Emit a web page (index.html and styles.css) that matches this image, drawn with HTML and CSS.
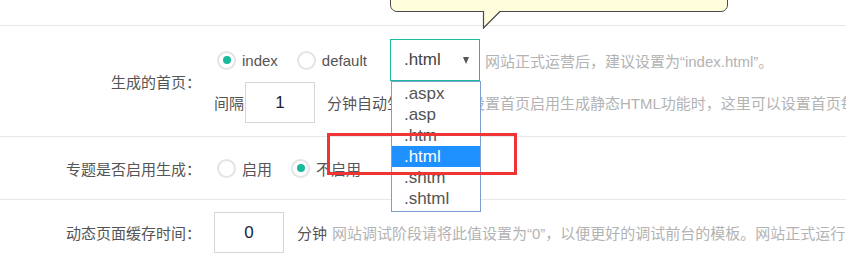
FILE: index.html
```html
<!DOCTYPE html>
<html lang="zh-CN">
<head>
    <meta charset="UTF-8">
    <title>生成设置</title>
    <link rel="stylesheet" href="styles.css">
</head>
<body>
    <div class="page">
        <div class="tip"></div>
        <svg class="tip-tail" width="20" height="20" viewBox="0 0 20 20">
            <polygon points="1.5,0 1.5,17 18,0" fill="#fffddc"/>
            <polyline points="1.5,0 1.5,17 18,0.5" fill="none" stroke="#4a4a4a" stroke-width="1.2"/>
        </svg>

        <div class="top"></div>

        <div class="row row-home">
            <label class="row-label">生成的首页：</label>
            <div class="row-field">
                <div class="line">
                    <span class="radio on"></span><span class="opt">index</span>
                    <span class="radio"></span><span class="opt">default</span>
                    <div class="select-wrap">
                        <div class="select">.html<span class="arrow"></span></div>
                        <ul class="select-list">
                            <li>.aspx</li>
                            <li>.asp</li>
                            <li>.htm</li>
                            <li class="selected">.html</li>
                            <li>.shtm</li>
                            <li>.shtml</li>
                        </ul>
                    </div>
                    <span class="hint">网站正式运营后，建议设置为“index.html”。</span>
                </div>
                <div class="line line-small">
                    <span>间隔</span>
                    <input class="num num-gap" type="text" value="1">
                    <span class="unit">分钟自动生成一次</span>
                    <span class="hint hint-gap">当设置首页启用生成静态HTML功能时，这里可以设置首页每隔多少分钟自动生成一次。</span>
                </div>
            </div>
        </div>

        <div class="row row-topic">
            <label class="row-label">专题是否启用生成：</label>
            <div class="row-field">
                <div class="line">
                    <span class="radio"></span><span class="opt">启用</span>
                    <span class="radio on"></span><span class="opt">不启用</span>
                </div>
            </div>
        </div>

        <div class="row row-cache">
            <label class="row-label">动态页面缓存时间：</label>
            <div class="row-field">
                <div class="line line-small">
                    <input class="num" type="text" value="0">
                    <span class="unit">分钟</span>
                    <span class="hint">网站调试阶段请将此值设置为“0”，以便更好的调试前台的模板。网站正式运行后请设置缓存时间。</span>
                </div>
            </div>
        </div>

        <div class="mark"></div>
    </div>
</body>
</html>
```

FILE: styles.css
```css
body {
    margin: 0;
    font-family: "Liberation Sans", "Noto Sans CJK SC", sans-serif;
    font-size: 15px;
    color: #555;
    background: #fff;
    overflow: hidden;
}
.page {
    position: relative;
    width: 846px;
    height: 257px;
    overflow: hidden;
}
.top {
    height: 25px;
}
.row {
    display: flex;
    align-items: center;
    border-top: 1px solid #e8e8e8;
    white-space: nowrap;
}
.row-home {
    height: 110px;
}
.row-topic {
    height: 62px;
}
.row-cache {
    padding: 12px 0;
}
.row-label {
    width: 201px;
    flex-shrink: 0;
    text-align: right;
    color: #555;
}
.row-field {
    padding-left: 13px;
}
.line {
    display: flex;
    align-items: center;
    height: 42px;
}
.line-small {
    height: 41px;
    margin-top: 1px;
}
.row-cache .line-small {
    margin-top: 0;
}
.radio {
    position: relative;
    width: 19px;
    height: 19px;
    margin: 0 6px 0 3px;
    border: 2px solid #e4e4e4;
    border-radius: 50%;
    box-sizing: border-box;
}
.radio.on::after {
    content: "";
    position: absolute;
    top: 3.5px;
    left: 3.5px;
    width: 8px;
    height: 8px;
    border-radius: 50%;
    background: #1ab99b;
}
.opt {
    margin-right: 16px;
}
.select-wrap {
    position: relative;
    margin-left: 7px;
}
.select {
    display: flex;
    align-items: center;
    width: 90px;
    height: 42px;
    padding-left: 13px;
    border: 1px solid #1abc9c;
    box-sizing: border-box;
    font-size: 17px;
    color: #444;
}
.arrow {
    margin-left: auto;
    margin-right: 10px;
    border-left: 3.5px solid transparent;
    border-right: 3.5px solid transparent;
    border-top: 7px solid #555;
}
.select-list {
    position: absolute;
    top: 42px;
    left: 1px;
    width: 90px;
    margin: 0;
    padding: 1px 0 2px;
    list-style: none;
    background: #fff;
    border: 1px solid #7d9cd2;
    box-sizing: border-box;
    z-index: 2;
}
.select-list li {
    height: 21px;
    line-height: 21px;
    padding-left: 12px;
    font-size: 17px;
    color: #555;
}
.select-list li.selected {
    background: #1e90ff;
    color: #fff;
}
.hint {
    margin-left: 5px;
    color: #b3b3b3;
}
.hint-gap {
    margin-left: 8px;
}
.num {
    width: 70px;
    height: 41px;
    margin: 0 0 0 1px;
    padding: 0;
    border: 1px solid #d6d6d6;
    box-sizing: border-box;
    text-align: center;
    font-family: inherit;
    font-size: 17px;
    color: #223;
    background: #fff;
}
.row-cache .num {
    margin-left: 0;
}
.unit {
    margin-left: 12px;
}
.row-cache .unit {
    margin-left: 13px;
}
.tip {
    position: absolute;
    left: 390px;
    top: -40px;
    width: 338px;
    height: 52px;
    background: #fffddc;
    border: 1px solid #4a4a4a;
    border-radius: 7px;
    box-sizing: border-box;
}
.tip-tail {
    position: absolute;
    left: 482px;
    top: 11px;
}
.mark {
    position: absolute;
    left: 327px;
    top: 133px;
    width: 190px;
    height: 42px;
    border: 3px solid #ee3434;
    box-sizing: border-box;
    z-index: 3;
}
```
